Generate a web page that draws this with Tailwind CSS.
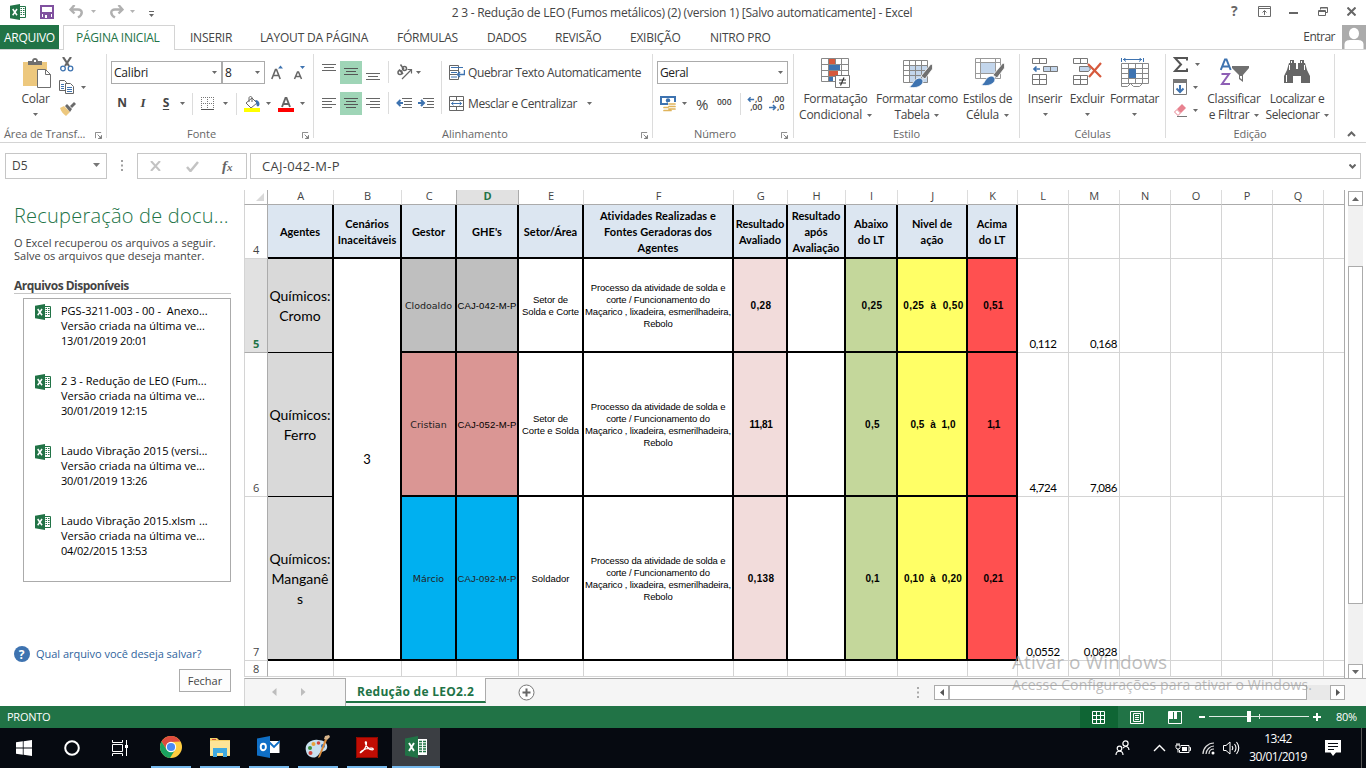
<!DOCTYPE html>
<html lang="pt-BR">
<head>
<meta charset="utf-8">
<title>2 3 - Redução de LEO - Excel</title>
<script src="https://cdn.jsdelivr.net/npm/@tailwindcss/browser@4"></script>
</head>
<body class="w-[1366px] h-[768px] overflow-hidden bg-white font-['Open_Sans','Noto_Sans',sans-serif] text-[12px] leading-4 tracking-[-0.25px] text-[#444] whitespace-nowrap cursor-default">
<svg width="0" height="0" class="absolute">
  <defs>
    <symbol id="caret" viewBox="0 0 5 3"><path d="M0 0h5L2.5 3z" fill="#6a6a6a"/></symbol>
    <symbol id="launcher" viewBox="0 0 8 8"><path d="M.5 7V.5H7" fill="none" stroke="#777"/><path d="M3 3l3 3M7.5 3.5v4h-4" fill="none" stroke="#777"/><path d="M7.5 4v3.500H4z" fill="#777"/></symbol>
    <symbol id="xl" viewBox="0 0 16 16"><path d="M9 2.500h6.500v11H9" fill="#fff" stroke="#217346"/><path d="M10.500 4.500h1.500m1 0h1.500m-4 2h1.500m1 0h1.500m-4 2h1.500m1 0h1.500m-4 2h1.500m1 0h1.500" stroke="#217346"/><path d="M0 1.800L10 0v16L0 14.200z" fill="#217346"/><path d="M2.700 5l4.300 6.200M7 5l-4.300 6.200" stroke="#fff" stroke-width="1.500"/></symbol>
  </defs>
</svg>
<div class="flex flex-col h-[768px]">

<!-- Title bar -->
<header class="flex h-[25px] items-center">
  <div class="flex w-[437px] items-center h-6 -mt-[2px]">
    <svg class="ml-[10px] w-4 h-4"><use href="#xl"/></svg>
    <svg class="ml-[14px]" width="14" height="14" viewBox="0 0 14 14"><path d="M1 1h12v12H1z" fill="none" stroke="#80519f" stroke-width="2"/><path d="M1 7h12v2H1z" fill="#80519f"/><path d="M3 9h8v4H3z" fill="#80519f"/><path d="M5 10h2v3H5z" fill="#fff"/></svg>
    <svg class="ml-[15px]" width="14" height="14" viewBox="0 0 14 14"><path d="M5.500 0L1.500 4.500l4 4M2 4.500H9c5 0 5 5 0 8" fill="none" stroke="#b0b0b0" stroke-width="2.400"/></svg>
    <svg class="ml-2 w-[5px] h-[3px] opacity-50"><use href="#caret"/></svg>
    <svg class="ml-[14px]" width="14" height="14" viewBox="0 0 14 14"><path d="M8.500 0l4 4.500-4 4M12 4.500H5c-5 0-5 5 0 8" fill="none" stroke="#b0b0b0" stroke-width="2.400"/></svg>
    <svg class="ml-[6px] w-[5px] h-[3px] opacity-50"><use href="#caret"/></svg>
    <svg class="ml-[14px] mt-1" width="5" height="6" viewBox="0 0 5 6"><path d="M0 .5h5" stroke="#666"/><path d="M0 3h5L2.500 6z" fill="#666"/></svg>
  </div>
  <div class="w-[490px] text-center"><span>2 3 - Redução de LEO (Fumos metálicos) (2) (version 1) [Salvo automaticamente] - Excel</span></div>
  <div class="flex flex-1 items-center justify-end pr-[10px] h-[22px] -mt-[3px] text-[#666]">
    <span class="w-[9px] mr-[18px] text-[14px] font-bold">?</span>
    <svg class="mr-[18px]" width="13" height="11" viewBox="0 0 13 11"><path d="M.5.5h12v10H.5zM.5 2.500h12M6.500 9V5M4.500 6.500l2-2 2 2" fill="none" stroke="#6a6a6a"/></svg>
    <svg class="mr-5 mt-[3px]" width="9" height="2"><path d="M0 0h9v2H0z" fill="#666"/></svg>
    <svg class="mr-[19px]" width="10" height="9" viewBox="0 0 10 9"><path d="M2.500 2.500v-2h7v5h-2M.5 3.500h7v5h-7zM.5 4.500h7M2.500 1h7" fill="none" stroke="#666"/></svg>
    <svg width="9" height="9" viewBox="0 0 9 9"><path d="M.5.5l8 8m0-8l-8 8" stroke="#666" stroke-width="2"/></svg>
  </div>
</header>

<!-- Ribbon tabs -->
<nav class="flex h-[25px] border-b border-[#d4d4d4]">
  <div class="w-[59px] h-6 bg-[#217346] text-white pl-1 leading-[25px] tracking-[-0.3px]">ARQUIVO</div>
  <div class="ml-1 w-[112px] h-[25px] border border-b-0 border-[#d4d4d4] bg-white text-[#217346] leading-6 pl-[12px]">PÁGINA INICIAL</div>
  <div class="flex flex-1 leading-[26px]">
    <span class="ml-[15px] w-[70px]">INSERIR</span><span class="w-[137px] tracking-[-0.2px]">LAYOUT DA PÁGINA</span><span class="w-[90px]">FÓRMULAS</span><span class="w-[68px]">DADOS</span><span class="w-[75px]">REVISÃO</span><span class="w-20">EXIBIÇÃO</span><span>NITRO PRO</span>
  </div>
  <span class="leading-6 mr-[7px] tracking-[-0.5px]">Entrar</span>
  <svg width="24" height="24" viewBox="0 0 24 24"><path d="M0 0h24v24H0z" fill="#ababab"/><ellipse cx="12" cy="8.500" rx="5" ry="5.800" fill="#fff"/><path d="M2.500 24v-4.500c0-4 4-4.500 6-4.500h7c2 0 6 .5 6 4.500V24z" fill="#fff"/></svg>
</nav>

<!-- Ribbon -->
<section class="flex h-[93px] border-b border-[#d4d4d4]">
  <!-- Clipboard -->
  <div class="flex flex-col w-[106px]">
    <div class="flex h-[76px]">
      <div class="w-[56px] pl-[15px] pt-2 flex flex-col items-center">
        <svg width="28" height="31" viewBox="0 0 28 31" class="shrink-0 ml-[2px]"><path d="M0 4h24v24H0z" fill="#edc87e"/><path d="M5 7V3h4c0-4 6-4 6 0h4v4z" fill="#6f6f6f"/><path d="M11 2h2v2h-2z" fill="#fff"/><path d="M14.500 11.500h8l5 5V29.500h-13z" fill="#fff" stroke="#6f6f6f"/><path d="M22.500 11.500v5h5" fill="none" stroke="#6f6f6f"/></svg>
        <span class="mt-[2px]">Colar</span>
        <svg class="mt-[6px] w-[5px] h-[3px]"><use href="#caret"/></svg>
      </div>
      <div class="pt-[7px] pl-[3px] flex flex-col">
        <svg width="15" height="15" viewBox="0 0 15 15" class="ml-[1px]"><path d="M3 0l6 9M11 0L5 9" stroke="#666" stroke-width="2.200"/><circle cx="3" cy="11.500" r="2.300" fill="none" stroke="#3e73b0" stroke-width="1.300"/><circle cx="10.500" cy="11.500" r="2.300" fill="none" stroke="#3e73b0" stroke-width="1.300"/></svg>
        <div class="flex items-center mt-2">
          <svg width="15" height="14" viewBox="0 0 15 14"><path d="M.5.500h5l2 2V10.500h-7z" fill="#fff" stroke="#666"/><path d="M2 4.500h3m-3 2h3m-3 2h3" stroke="#3e73b0"/><path d="M6.500 3.500h5l3 3v7h-8z" fill="#fff" stroke="#666"/><path d="M8 7.500h5m-5 2h5m-5 2h5" stroke="#3e73b0"/></svg>
          <svg class="ml-[7px] w-[5px] h-[3px]"><use href="#caret"/></svg>
        </div>
        <svg class="mt-2" width="17" height="14" viewBox="0 0 17 14"><path d="M1 6l4-2 6 6-4 4C4 12 2 9 1 6z" fill="#edc87e"/><path d="M6 4l2-2 5 5-2 3z" fill="#6a6a6a"/><path d="M11 4l4-4 2 2-4 4z" fill="#6a6a6a"/></svg>
      </div>
    </div>
    <div class="flex h-4 items-center text-[11px] tracking-[-0.12px] text-[#666] pl-1"><span class="w-[91px]">Área de Transf...</span><svg class="w-[7px] h-[7px] mt-[2px]"><use href="#launcher"/></svg></div>
  </div>
  <div class="w-px h-[84px] mt-1 bg-[#dcdcdc]"></div>

  <!-- Font -->
  <div class="flex flex-col w-[206px]">
    <div class="h-[76px] pt-[11px] pl-1">
      <div class="flex h-[23px] items-center">
        <div class="flex w-[111px] h-[23px] border border-[#ababab] items-center pl-[2px] pr-1 text-[#222] tracking-[-0.2px]"><span class="flex-1">Calibri</span><svg class="w-[5px] h-[3px]"><use href="#caret"/></svg></div>
        <div class="flex w-[43px] h-[23px] border border-[#ababab] items-center pl-[2px] pr-1 text-[#222]"><span class="flex-1">8</span><svg class="w-[5px] h-[3px]"><use href="#caret"/></svg></div>
        <svg class="ml-[6px]" width="34" height="16" viewBox="0 0 34 16"><path d="M.8 14L4.500 4.500h1L9.200 14M2 10.500h6" fill="none" stroke="#666" stroke-width="1.600"/><path d="M7 3.500L9.500.5 12 3.500z" fill="#3e73b0"/><path d="M23.500 14l3-7h1l3 7m-6-2.500h5" fill="none" stroke="#666" stroke-width="1.500"/><path d="M29 1h5l-2.500 3z" fill="#3e73b0"/></svg>
      </div>
      <div class="flex h-[23px] items-center mt-2">
        <b class="w-[22px] text-center text-[12px] -mt-[2px]">N</b>
        <i class="w-[20px] text-center text-[13px] font-['Liberation_Serif',serif] font-bold -mt-[2px]">I</i>
        <b class="w-[26px] text-center text-[12px] underline underline-offset-2 -mt-[2px]">S</b>
        <svg class="ml-[1px] w-[5px] h-[3px]"><use href="#caret"/></svg>
        <div class="ml-[7px] w-px h-[22px] bg-[#dcdcdc]"></div>
        <svg class="ml-2" width="14" height="14" viewBox="0 0 14 14"><path d="M.5 0v13M6.500 0v13M12.500 0v13M0 .5h13M0 6.500h13" stroke="#777" stroke-dasharray="1 1"/><path d="M0 12.500h13" stroke="#555"/></svg>
        <svg class="ml-[8px] w-[5px] h-[3px]"><use href="#caret"/></svg>
        <div class="ml-2 w-px h-[22px] bg-[#dcdcdc]"></div>
        <svg class="ml-[7px]" width="16" height="16" viewBox="0 0 16 16"><path d="M2 7l6-5 5 5-6 5z" fill="#fff" stroke="#666"/><path d="M5 6V2c0-2 3-2 3 0v4" fill="none" stroke="#666"/><path d="M11 4c3 0 4.500 2 4.500 4S14 11 13 10s0-3-2-6z" fill="#3e73b0"/><path d="M0 12h16v4H0z" fill="#ff0"/></svg>
        <svg class="ml-[6px] w-[5px] h-[3px]"><use href="#caret"/></svg>
        <svg class="ml-[7px]" width="16" height="16" viewBox="0 0 16 16"><path d="M4 11L7.500 2h1L12 11M5.500 8h5" fill="none" stroke="#666" stroke-width="1.900"/><path d="M0 12h16v4H0z" fill="red"/></svg>
        <svg class="ml-[6px] w-[5px] h-[3px]"><use href="#caret"/></svg>
      </div>
    </div>
    <div class="flex h-4 items-center text-[11px] tracking-[0px] text-[#666]"><span class="ml-20 w-[115px]">Fonte</span><svg class="w-[7px] h-[7px] mt-[2px]"><use href="#launcher"/></svg></div>
  </div>
  <div class="w-px h-[84px] mt-1 bg-[#dcdcdc]"></div>

  <!-- Alignment -->
  <div class="flex flex-col w-[338px]">
    <div class="flex h-[76px] pt-[11px]">
      <div class="w-[128px] pl-[4px]">
        <div class="flex h-[23px]">
          <div class="w-[22px] h-[23px] pl-1"><svg width="14" height="23"><path d="M0 3.500h14M2 6.500h10M0 9.500h14" stroke="#666"/></svg></div>
          <div class="w-[22px] h-[23px] pl-1 bg-[#9fd5b7]"><svg width="14" height="23"><path d="M0 7.500h14M2 10.500h10M0 13.500h14" stroke="#555"/></svg></div>
          <div class="w-[22px] h-[23px] pl-1"><svg width="14" height="23"><path d="M0 12.500h14M2 15.500h10M0 18.500h14" stroke="#666"/></svg></div>
          <div class="ml-[4px] w-px h-[22px] bg-[#dcdcdc]"></div>
          <svg class="ml-[7px] mt-[3px]" width="17" height="16" viewBox="0 0 17 16"><circle cx="4" cy="8.500" r="2" fill="none" stroke="#666" stroke-width="1.500"/><path d="M3 5.500l4 4.500" stroke="#666" stroke-width="1.500"/><circle cx="8.500" cy="4.500" r="2" fill="none" stroke="#666" stroke-width="1.500"/><path d="M4.500 .5l3.500 5" stroke="#666" stroke-width="1.500"/><path d="M6 15l9-9M11.500 5.500H15.500V9.500" fill="none" stroke="#666" stroke-width="1.200"/></svg>
          <svg class="ml-[3px] mt-[10px] w-[5px] h-[3px]"><use href="#caret"/></svg>
        </div>
        <div class="flex h-[23px] mt-2">
          <div class="w-[22px] h-[23px] pl-1"><svg width="14" height="23"><path d="M0 6.500h14M0 9.500h10M0 12.500h14M0 15.500h10" stroke="#666"/></svg></div>
          <div class="w-[22px] h-[23px] pl-1 bg-[#9fd5b7]"><svg width="14" height="23"><path d="M0 6.500h14M2 9.500h10M0 12.500h14M2 15.500h10" stroke="#555"/></svg></div>
          <div class="w-[22px] h-[23px] pl-1"><svg width="14" height="23"><path d="M0 6.500h14M4 9.500h10M0 12.500h14M4 15.500h10" stroke="#666"/></svg></div>
          <div class="ml-[4px] w-px h-[22px] bg-[#dcdcdc]"></div>
          <svg class="ml-[7px]" width="16" height="23"><path d="M6 6.500h10M8 9.500h8M8 12.500h8M6 15.500h10" stroke="#666"/><path d="M7 11H2M4.500 8L1.500 11l3 3" fill="none" stroke="#3e73b0" stroke-width="2"/></svg>
          <svg class="ml-[6px]" width="16" height="23"><path d="M5 6.500h11M9 9.500h7M9 12.500h7M5 15.500h11" stroke="#666"/><path d="M0 11h5M3 8l3 3-3 3" fill="none" stroke="#3e73b0" stroke-width="2"/></svg>
        </div>
      </div>
      <div class="w-px h-[53px] bg-[#dcdcdc] -ml-[1px]"></div>
      <div class="pl-[7px]">
        <div class="flex h-[23px] items-center">
          <svg width="16" height="16" viewBox="0 0 16 16"><path d="M.5.5h9v14h-9zM0 5.500h9M0 9.500h9" fill="none" stroke="#666"/><path d="M2 2.500h12M2 7.500h6M2 12h6" stroke="#3e73b0"/><path d="M15.500 5v4.500H9M11 7L8.500 9.500 11 12" fill="none" stroke="#3e73b0" stroke-width="1.500"/></svg>
          <span class="ml-[3px] tracking-[-0.4px]">Quebrar Texto Automaticamente</span>
        </div>
        <div class="flex h-[23px] items-center mt-2">
          <svg width="16" height="16" viewBox="0 0 16 16"><path d="M.5.5h14v14H.5zM0 4.500h15M0 10.500h15M7.500 0v4M7.500 11v4" fill="none" stroke="#666"/><path d="M2.500 7.500h10M4.500 5.800L2.500 7.500l2 1.700M10.500 5.800l2 1.700-2 1.700" fill="none" stroke="#3e73b0"/></svg>
          <span class="ml-[3px] tracking-[-0.4px]">Mesclar e Centralizar</span>
          <svg class="ml-[10px] w-[5px] h-[3px]"><use href="#caret"/></svg>
        </div>
      </div>
    </div>
    <div class="flex h-4 items-center text-[11px] tracking-[0px] text-[#666]"><span class="ml-32 w-[199px]">Alinhamento</span><svg class="w-[7px] h-[7px] mt-[2px]"><use href="#launcher"/></svg></div>
  </div>
  <div class="w-px h-[84px] mt-1 bg-[#dcdcdc]"></div>

  <!-- Number -->
  <div class="flex flex-col w-[140px]">
    <div class="h-[76px] pt-[11px] pl-1">
      <div class="flex w-[131px] h-[23px] border border-[#ababab] items-center pl-[2px] pr-1 text-[#222] tracking-[-0.4px]"><span class="flex-1">Geral</span><svg class="w-[5px] h-[3px]"><use href="#caret"/></svg></div>
      <div class="flex h-[23px] items-center mt-2">
        <svg class="ml-[3px]" width="17" height="17" viewBox="0 0 17 17"><path d="M0 1h16v9H0z" fill="#3e73b0"/><path d="M2 3h12v5H2z" fill="#fff"/><circle cx="8" cy="5.500" r="2.200" fill="#3e73b0"/><path d="M8 7h9v9H4v-4h4z" fill="#fff"/><path d="M9 9h6m-6 2.500h6m-6 2.500h6M4 12.500h4m-4 3h7" stroke="#e0b45c" stroke-width="1.700" stroke-linecap="round"/></svg>
        <svg class="ml-[5px] w-[5px] h-[3px]"><use href="#caret"/></svg>
        <span class="ml-[9px] w-[14px] text-[15px]">%</span>
        <span class="ml-[7px] w-[16px] text-[8.5px] font-semibold tracking-[0px] -mt-[3px]">000</span>
        <div class="ml-[7px] w-px h-[22px] bg-[#dcdcdc]"></div>
        <div class="ml-[5px] w-4 h-[17px] text-[9px] leading-[8px] font-semibold text-right tracking-[-0.3px]"><svg class="inline" width="8" height="7" viewBox="0 0 9 7"><path d="M8 3.500H2M4 1L1.500 3.500 4 6" fill="none" stroke="#3e73b0" stroke-width="1.600"/></svg>,0<br>,00</div>
        <div class="ml-[6px] w-[16px] h-[17px] text-[9px] leading-[8px] font-semibold text-right tracking-[-0.3px]">,00<br><svg class="inline" width="8" height="7" viewBox="0 0 8 7"><path d="M0 3.500h6M4 1l2.500 2.500L4 6" fill="none" stroke="#3e73b0" stroke-width="1.600"/></svg>,0</div>
      </div>
    </div>
    <div class="flex h-4 items-center text-[11px] tracking-[-0.1px] text-[#666]"><span class="ml-[41px] w-[87px]">Número</span><svg class="w-[7px] h-[7px] mt-[2px]"><use href="#launcher"/></svg></div>
  </div>
  <div class="w-px h-[84px] mt-1 bg-[#dcdcdc]"></div>

  <!-- Styles -->
  <div class="flex flex-col w-[225px]">
    <div class="flex h-[76px] pt-2">
      <div class="w-[83px] flex flex-col items-center">
        <svg width="30" height="31" viewBox="0 0 30 31" class="shrink-0"><path d="M.5.5h27v23H.5z" fill="#fff"/><path d="M8 1h6v5H8zM8 13h9v5H8z" fill="#d6593c"/><path d="M8 7h11v5H8zM8 19h4v5H8z" fill="#3e73b0"/><path d="M.5.5h27v23H.5zM.5 6.500h27M.5 12.500h27M.5 18.500h27M7.500.5v23M14.500.5v6M20.500.5v23" fill="none" stroke="#888"/><path d="M14.500 17.500h14v12h-14z" fill="#fff" stroke="#777"/><path d="M18 22h7M18 25h7M23 19.500l-3.500 8" stroke="#333" stroke-width="1.200"/></svg>
        <span class="mt-[2px]">Formatação</span>
        <span class="flex items-center">Condicional<svg class="ml-[5px] w-[5px] h-[3px]"><use href="#caret"/></svg></span>
      </div>
      <div class="w-[80px] flex flex-col items-center tracking-[-0.35px]">
        <svg width="30" height="31" viewBox="0 0 30 31" class="shrink-0 ml-[2px]"><path d="M.5 2.500h24v22H.5z" fill="#fff"/><path d="M7 8h18v17H7z" fill="#c3d6ec"/><path d="M.5 2.500h24v22H.5zM.5 7.500h24M.5 12.500h24M.5 17.500h24M6.500 2.500v22M12.500 2.500v22M18.500 2.500v22" fill="none" stroke="#888"/><path d="M18 18L28 6l1.500 1v4L22 21z" fill="#707070" stroke="#fff" stroke-width=".8"/><path d="M6 29c4-1 4-8 10-9 3 0 4 2 4 4-1 4-7 7-14 5z" fill="#3e73b0" stroke="#fff" stroke-width=".8"/></svg>
        <span class="mt-[2px]">Formatar como</span>
        <span class="flex items-center">Tabela<svg class="ml-[5px] w-[5px] h-[3px]"><use href="#caret"/></svg></span>
      </div>
      <div class="w-[61px] flex flex-col items-center">
        <svg width="30" height="31" viewBox="0 0 30 31" class="shrink-0 ml-1"><path d="M.5.500h27v20H.5z" fill="#fff"/><path d="M6 5h14v10H6z" fill="#c3d6ec"/><path d="M.5.5h25v20H.5zM.5 4.500h25M.5 15.500h25M5.500.5v20M20.500.5v20" fill="none" stroke="#999"/><path d="M18 17L28 5l1.500 1v4L22 20z" fill="#707070" stroke="#fff" stroke-width=".8"/><path d="M6 27c4-1 4-8 10-9 3 0 4 2 4 4-1 4-7 7-14 5z" fill="#3e73b0" stroke="#fff" stroke-width=".8"/></svg>
        <span class="mt-[2px] tracking-[-0.35px]">Estilos de</span>
        <span class="flex items-center">Célula<svg class="ml-[5px] w-[5px] h-[3px]"><use href="#caret"/></svg></span>
      </div>
    </div>
    <div class="h-4 text-[11px] tracking-[-0.1px] text-[#666] text-center">Estilo</div>
  </div>
  <div class="w-px h-[84px] mt-1 bg-[#dcdcdc]"></div>

  <!-- Cells -->
  <div class="flex flex-col w-[145px]">
    <div class="flex h-[76px] pt-[8px]">
      <div class="w-[46px] ml-[2px] flex flex-col items-center">
        <svg width="26" height="31" viewBox="0 0 26 31" class="shrink-0"><path d="M.5 .5h14v5H.5zM7.500 .5v5M.5 16.500h14v10H.5zM7.500 16.500v10M.5 21.500h14" fill="none" stroke="#777"/><path d="M11.500 8.500h14v5h-14z" fill="#c3d6ec" stroke="#777"/><path d="M18.500 8.500v5" stroke="#777"/><path d="M8 11H2M4.500 8.500L2 11l2.500 2.500" fill="none" stroke="#3e73b0" stroke-width="1.700"/></svg>
        <span class="mt-[2px]">Inserir</span><svg class="mt-[6px] w-[5px] h-[3px]"><use href="#caret"/></svg>
      </div>
      <div class="w-[38px] flex flex-col items-center">
        <svg width="29" height="31" viewBox="0 0 29 31" class="shrink-0"><path d="M.5 .5h14v5H.5zM7.500 .5v5M.5 17.500h14v9H.5zM7.500 17.500v9M.5 21.500h14" fill="none" stroke="#777"/><path d="M6.500 8.500h9l2 2.500-2 2.500h-9z" fill="#c3d6ec" stroke="#777"/><path d="M15 6l13 13M28 5L16 19" stroke="#d6593c" stroke-width="2.200"/></svg>
        <span class="mt-[2px] tracking-[-0.35px]">Excluir</span><svg class="mt-[6px] w-[5px] h-[3px]"><use href="#caret"/></svg>
      </div>
      <div class="w-[57px] flex flex-col items-center">
        <svg width="28" height="31" viewBox="0 1 28 31" class="shrink-0"><path d="M.5 0v5M22.500 0v5M2 2.500h19M5 .5L2.500 2.500 5 4.500M18 .5l2.500 2L18 4.500" fill="none" stroke="#3e73b0"/><path d="M.5 6.500h27v20H.5zM.5 11.500h27M.5 21.500h27M7.500 6.500v20M14.500 6.500v20M21.500 6.500v20M.5 16.500h27" fill="#fff" stroke="#888"/><path d="M8 12h7v9H8z" fill="#3e73b0"/><path d="M.5 26v3.500h6l3-3 3 3h6l3-3" fill="none" stroke="#888"/></svg>
        <span class="mt-[2px] tracking-[-0.35px]">Formatar</span><svg class="mt-[6px] w-[5px] h-[3px]"><use href="#caret"/></svg>
      </div>
    </div>
    <div class="h-4 text-[11px] tracking-[-0.1px] text-[#666] text-center">Células</div>
  </div>
  <div class="w-px h-[84px] mt-1 bg-[#dcdcdc]"></div>

  <!-- Editing -->
  <div class="flex flex-col w-[168px]">
    <div class="flex h-[76px]">
      <div class="w-[36px] pl-[7px] pt-[6px]">
        <div class="flex items-center h-4"><svg width="15" height="15" viewBox="0 0 15 15"><path d="M14 3.500V1H2l6 6.500L2 14h12v-2.500" fill="none" stroke="#555" stroke-width="2"/></svg><svg class="ml-[7px] w-[5px] h-[3px]"><use href="#caret"/></svg></div>
        <div class="flex items-center h-4 mt-[7px]"><svg width="14" height="16" viewBox="0 0 14 16"><path d="M.5.5h13v15H.5z" fill="#fff" stroke="#777"/><path d="M0 0h14v4H0z" fill="#777"/><path d="M7 6v7M3.500 9.500L7 13l3.500-3.500" fill="none" stroke="#3e73b0" stroke-width="2"/></svg><svg class="ml-[6px] w-[5px] h-[3px]"><use href="#caret"/></svg></div>
        <div class="flex items-center h-4 mt-[7px]"><svg width="14" height="13" viewBox="0 0 14 13"><path d="M4 5l5-5 4 4-5 5z" fill="#e8828f"/><path d="M1.500 8L4 5.500l3.500 3.500L5 11.500z" fill="#fff" stroke="#e8828f"/><path d="M4 12.500h10" stroke="#777"/></svg><svg class="ml-[6px] w-[5px] h-[3px]"><use href="#caret"/></svg></div>
      </div>
      <div class="w-[64px] pt-2 flex flex-col items-center">
        <svg width="29" height="31" viewBox="0 0 29 31" class="shrink-0"><path d="M.8 12L5 1.500h1.500L10.700 12M2.500 8.500h6.500" fill="none" stroke="#3e73b0" stroke-width="2"/><path d="M1.500 16h7.500L2 26h8" fill="none" stroke="#8e5fb5" stroke-width="2"/><path d="M12 8h17v2l-6 7v7l-4-3v-4l-7-7z" fill="#707070"/><path d="M20 18h2v3.500l-2-1.500z" fill="#fff"/></svg>
        <span class="mt-[2px]">Classificar</span>
        <span class="flex items-center">e Filtrar<svg class="ml-[5px] w-[5px] h-[3px]"><use href="#caret"/></svg></span>
      </div>
      <div class="w-[62px] pt-2 flex flex-col items-center">
        <svg width="26" height="31" viewBox="0 0 26 31" class="shrink-0"><path d="M6 2h4v3h2v6h2V5h2V2h4v3h1l2 7 3 6v7h-9v-7h-8v7H0v-7l3-6 2-7h1z" fill="#666"/><path d="M7.500 3v2M17.500 3v2M5.500 7v5M20.500 7v5M2.500 17v7M16.500 18v6" stroke="#fff"/></svg>
        <span class="mt-[2px] tracking-[-0.4px]">Localizar e</span>
        <span class="flex items-center tracking-[-0.4px]">Selecionar<svg class="ml-[4px] w-[5px] h-[3px]"><use href="#caret"/></svg></span>
      </div>
    </div>
    <div class="h-4 text-[11px] tracking-[-0.1px] text-[#666] text-center">Edição</div>
  </div>
  <div class="w-px h-[84px] mt-1 bg-[#dcdcdc]"></div>
  <div class="pt-[81px] pl-[12px]"><svg width="9" height="6"><path d="M1 5l3.500-3.500L8 5" fill="none" stroke="#666" stroke-width="2"/></svg></div>
</section>

<!-- Formula bar -->
<section class="flex h-[47px] pt-[10px] pl-[5px] tracking-[0px]">
  <div class="flex items-center w-[102px] h-[26px] border border-[#c6c6c6] pl-[6px] pr-[6px]"><span class="flex-1 text-[12px]">D5</span><svg class="w-[7px] h-[4px] -mt-[3px]"><path d="M0 0h7L3.500 4z" fill="#777"/></svg></div>
  <svg class="ml-[14px] mt-[7px]" width="2" height="12"><path d="M0 1h2M0 5.500h2M0 10h2" stroke="#a0a0a0" stroke-width="2"/></svg>
  <div class="flex items-center ml-[14px] w-[110px] h-[26px] border border-[#c6c6c6]">
    <svg class="ml-[12px]" width="11" height="10"><path d="M1 0l9 10M10 0L1 10" stroke="#c3c3c3" stroke-width="2"/></svg>
    <svg class="ml-[25px]" width="13" height="11"><path d="M1 6l3.500 4L12 1" fill="none" stroke="#c3c3c3" stroke-width="2.500"/></svg>
    <span class="ml-[23px] font-['Liberation_Serif',serif] italic font-bold text-[15px] text-[#666]">f<span class="text-[11px]">x</span></span>
  </div>
  <div class="flex items-center ml-[3px] w-[1111px] h-[26px] border border-[#c6c6c6] pl-[11px] pr-1"><span class="flex-1 text-[13px] tracking-[0.32px]">CAJ-042-M-P</span><svg width="7" height="5"><path d="M.5.5l3 3 3-3" fill="none" stroke="#666" stroke-width="2"/></svg></div>
</section>

<!-- Workspace -->
<main class="flex h-[516px]">
  <!-- Document recovery pane -->
  <aside class="w-[244px] pl-[14px] tracking-[0px]">
    <h1 class="mt-[12px] h-7 leading-7 text-[20px] font-light text-[#217346] tracking-[0.22px]">Recuperação de docu...</h1>
    <p class="mt-[6px] text-[11px] leading-[13px]">O Excel recuperou os arquivos a seguir.<br>Salve os arquivos que deseja manter.</p>
    <h2 class="mt-[16px] w-[217px] h-[16px] border-b border-[#c6c6c6] text-[12px] leading-[15px] font-bold tracking-[-0.5px]">Arquivos Disponíveis</h2>
    <div class="mt-1 ml-[9px] w-[208px] h-[284px] border border-[#ababab] pt-[4px] pl-[11px] text-[11px] leading-[15px] text-black">
      <div class="flex h-[70px]"><svg class="w-4 h-4 mt-[1px] mr-[10px]"><use href="#xl"/></svg><p>PGS-3211-003 - 00 -&nbsp; Anexo...<br>Versão criada na última ve...<br><span class="tracking-[-0.2px]">13/01/2019 20:01</span></p></div>
      <div class="flex h-[70px]"><svg class="w-4 h-4 mt-[1px] mr-[10px]"><use href="#xl"/></svg><p>2 3 - Redução de LEO (Fum...<br>Versão criada na última ve...<br><span class="tracking-[-0.2px]">30/01/2019 12:15</span></p></div>
      <div class="flex h-[70px]"><svg class="w-4 h-4 mt-[1px] mr-[10px]"><use href="#xl"/></svg><p>Laudo Vibração 2015 (versi...<br>Versão criada na última ve...<br><span class="tracking-[-0.2px]">30/01/2019 13:26</span></p></div>
      <div class="flex"><svg class="w-4 h-4 mt-[1px] mr-[10px]"><use href="#xl"/></svg><p>Laudo Vibração 2015.xlsm&nbsp; <span class="-ml-[2px]">...</span><br>Versão criada na última ve...<br><span class="tracking-[-0.2px]">04/02/2015 13:53</span></p></div>
    </div>
    <div class="flex items-center mt-16 h-4 text-[11px] text-[#2f649d] tracking-[-0.03px]"><svg class="mr-[6px]" width="16" height="16"><circle cx="8" cy="8" r="8" fill="#3e73b0"/><text x="4.800" y="12.500" font-size="12" font-weight="700" fill="#fff">?</text></svg>Qual arquivo você deseja salvar?</div>
    <div class="mt-[7px] ml-[165px] w-[52px] h-[23px] border border-[#ababab] bg-[#fdfdfd] text-center text-[11px] leading-[22px]">Fechar</div>
  </aside>

  <div class="w-[1122px]">
    <div class="flex h-[488px]">
      <!-- Worksheet -->
      <div class="grid w-[1101px] h-[488px] border-r border-[#ababab] grid-cols-[24px_66px_68px_55px_62px_65px_150px_54px_58px_52px_70px_50px_51px_51px_51px_51px_51px_51px_20px] grid-rows-[15px_54px_94px_144px_164px_16px_1px] text-center [&>.font-bold.border-r-2]:pt-[2px] [&>.leading-3]:pt-[2px]">
        <!-- Column letters -->
        <div class="border-b border-r border-l border-[#ababab] border-l-[#d4d4d4] flex items-end justify-end pb-[3px] pr-[3px]"><svg width="8" height="8"><path d="M8 0v8H0z" fill="#d9d9d9"/></svg></div>
        <div class="border-b border-r border-r-[#dcdcdc] border-b-[#ababab] text-[11px] leading-[12px]">A</div>
        <div class="border-b border-r border-r-[#dcdcdc] border-b-[#ababab] text-[11px] leading-[12px]">B</div>
        <div class="border-b border-r border-r-[#ababab] border-b-[#ababab] text-[11px] leading-[12px]">C</div>
        <div class="border-b border-r border-r-[#ababab] border-b-[#ababab] text-[11px] leading-[12px] bg-[#e1e1e1] text-[#217346] font-bold">D</div>
        <div class="border-b border-r border-r-[#dcdcdc] border-b-[#ababab] text-[11px] leading-[12px]">E</div>
        <div class="border-b border-r border-r-[#dcdcdc] border-b-[#ababab] text-[11px] leading-[12px]">F</div>
        <div class="border-b border-r border-r-[#dcdcdc] border-b-[#ababab] text-[11px] leading-[12px]">G</div>
        <div class="border-b border-r border-r-[#dcdcdc] border-b-[#ababab] text-[11px] leading-[12px]">H</div>
        <div class="border-b border-r border-r-[#dcdcdc] border-b-[#ababab] text-[11px] leading-[12px]">I</div>
        <div class="border-b border-r border-r-[#dcdcdc] border-b-[#ababab] text-[11px] leading-[12px]">J</div>
        <div class="border-b border-r border-r-[#dcdcdc] border-b-[#ababab] text-[11px] leading-[12px]">K</div>
        <div class="border-b border-r border-r-[#dcdcdc] border-b-[#ababab] text-[11px] leading-[12px]">L</div>
        <div class="border-b border-r border-r-[#dcdcdc] border-b-[#ababab] text-[11px] leading-[12px]">M</div>
        <div class="border-b border-r border-r-[#dcdcdc] border-b-[#ababab] text-[11px] leading-[12px]">N</div>
        <div class="border-b border-r border-r-[#dcdcdc] border-b-[#ababab] text-[11px] leading-[12px]">O</div>
        <div class="border-b border-r border-r-[#dcdcdc] border-b-[#ababab] text-[11px] leading-[12px]">P</div>
        <div class="border-b border-r border-r-[#dcdcdc] border-b-[#ababab] text-[11px] leading-[12px]">Q</div>
        <div class="border-b border-b-[#ababab]"></div>

        <!-- Row 4 -->
        <div class="border border-t-0 border-[#d4d4d4] border-r-[#ababab] flex items-end justify-center text-[11px] leading-[16px]">4</div>
        <div class="flex items-center justify-center border-r-2 border-b-2 border-black bg-[#dce6f1] text-black font-['Lato'] font-bold text-[11px] tracking-[0px]">Agentes</div>
        <div class="flex items-center justify-center border-r-2 border-b-2 border-black bg-[#dce6f1] text-black font-['Lato'] font-bold text-[11px] tracking-[0.1px]">Cenários<br>Inaceitáveis</div>
        <div class="flex items-center justify-center border-r-2 border-b-2 border-black bg-[#dce6f1] text-black font-['Lato'] font-bold text-[11px] tracking-[0px]">Gestor</div>
        <div class="flex items-center justify-center border-r-2 border-b-2 border-black bg-[#dce6f1] text-black font-['Lato'] font-bold text-[11px] tracking-[0px]">GHE's</div>
        <div class="flex items-center justify-center border-r-2 border-b-2 border-black bg-[#dce6f1] text-black font-['Lato'] font-bold text-[11px] tracking-[0px]">Setor/Área</div>
        <div class="flex items-center justify-center border-r-2 border-b-2 border-black bg-[#dce6f1] text-black font-['Lato'] font-bold text-[11px] tracking-[0.1px]">Atividades Realizadas e<br>Fontes Geradoras dos<br>Agentes</div>
        <div class="flex items-center justify-center border-r-2 border-b-2 border-black bg-[#dce6f1] text-black font-['Lato'] font-bold text-[11px] tracking-[0px]">Resultado<br>Avaliado</div>
        <div class="flex items-center justify-center border-r-2 border-b-2 border-black bg-[#dce6f1] text-black font-['Lato'] font-bold text-[11px] tracking-[0px]">Resultado<br>após<br>Avaliação</div>
        <div class="flex items-center justify-center border-r-2 border-b-2 border-black bg-[#dce6f1] text-black font-['Lato'] font-bold text-[11px] tracking-[0px]">Abaixo<br>do LT</div>
        <div class="flex items-center justify-center border-r-2 border-b-2 border-black bg-[#dce6f1] text-black font-['Lato'] font-bold text-[11px] tracking-[0px]">Nivel de<br>ação</div>
        <div class="flex items-center justify-center border-r-2 border-b-2 border-black bg-[#dce6f1] text-black font-['Lato'] font-bold text-[11px] tracking-[0px]">Acima<br>do LT</div>
        <div class="border-r border-b border-[#d4d4d4]"></div><div class="border-r border-b border-[#d4d4d4]"></div><div class="border-r border-b border-[#d4d4d4]"></div><div class="border-r border-b border-[#d4d4d4]"></div><div class="border-r border-b border-[#d4d4d4]"></div><div class="border-r border-b border-[#d4d4d4]"></div><div class="border-b border-[#d4d4d4]"></div>

        <!-- Row 5 -->
        <div class="border border-t-0 border-[#d4d4d4] border-b-[#ababab] border-r-[#ababab] bg-[#e1e1e1] flex items-end justify-center text-[11px] leading-[16px] font-bold text-[#217346]">5</div>
        <div class="flex items-center justify-center border-r-2 border-b border-black bg-[#d9d9d9] text-black font-['Lato'] text-[14px] leading-5 tracking-[0px]">Químicos:<br>Cromo</div>
        <div class="row-span-3 flex items-center justify-center border-r-2 border-b-2 border-black text-black font-['Lato'] text-[13px]">3</div>
        <div class="flex items-center justify-center border-r-2 border-b-2 border-black bg-[#bfbfbf] text-[#222] font-['DejaVu_Sans'] text-[9.5px] leading-3 tracking-[0px]">Clodoaldo</div>
        <div class="flex items-center justify-center border-r-2 border-b-2 border-black bg-[#bfbfbf] text-black font-['Liberation_Sans'] text-[9.5px] leading-3 tracking-[0.15px]">CAJ-042-M-P</div>
        <div class="flex items-center justify-center border-r-2 border-b-2 border-black text-black font-['Liberation_Sans'] text-[9.5px] leading-3 tracking-[-0.1px]">Setor de<br>Solda e Corte</div>
        <div class="flex items-center justify-center border-r-2 border-b-2 border-black text-black font-['Liberation_Sans'] text-[9.5px] leading-3 tracking-[-0.17px]"><p>Processo da atividade de solda e<br>corte / Funcionamento do<br>Maçarico , lixadeira, esmerilhadeira,<br>Rebolo</p></div>
        <div class="flex items-center justify-center border-r-2 border-b-2 border-black bg-[#f2dcdb] text-black font-['Liberation_Sans'] font-bold text-[10px] tracking-[0.4px] pl-[2px]">0,28</div>
        <div class="border-r-2 border-b-2 border-black"></div>
        <div class="flex items-center justify-center border-r-2 border-b-2 border-black bg-[#c4d79b] text-black font-['Liberation_Sans'] font-bold text-[10px] tracking-[0.4px] pl-[2px]">0,25</div>
        <div class="flex items-center justify-center border-r-2 border-b-2 border-black bg-[#ffff66] text-black font-['Liberation_Sans'] font-bold text-[10px] tracking-[0.4px] [word-spacing:3px] pl-[3px]">0,25 à 0,50</div>
        <div class="flex items-center justify-center border-r-2 border-b-2 border-black bg-[#ff5050] text-black font-['Liberation_Sans'] font-bold text-[10px] tracking-[0.2px] pl-[3px]">0,51</div>
        <div class="flex items-end justify-center border-r border-b border-[#d4d4d4] text-black font-['Lato'] text-[11.5px] tracking-[-0.45px]">0,112</div>
        <div class="flex items-end justify-end pr-[2px] border-r border-b border-[#d4d4d4] text-black font-['Lato'] text-[11.5px] tracking-[-0.45px]">0,168</div>
        <div class="border-r border-b border-[#d4d4d4]"></div><div class="border-r border-b border-[#d4d4d4]"></div><div class="border-r border-b border-[#d4d4d4]"></div><div class="border-r border-b border-[#d4d4d4]"></div><div class="border-b border-[#d4d4d4]"></div>

        <!-- Row 6 -->
        <div class="border border-t-0 border-[#d4d4d4] border-r-[#ababab] flex items-end justify-center text-[11px] leading-[16px]">6</div>
        <div class="flex items-center justify-center border-r-2 border-b border-black bg-[#d9d9d9] text-black font-['Lato'] text-[14px] leading-5 tracking-[0px]">Químicos:<br>Ferro</div>
        <div class="flex items-center justify-center border-r-2 border-b-2 border-black bg-[#da9694] text-[#222] font-['DejaVu_Sans'] text-[9.5px] leading-3 tracking-[0px]">Cristian</div>
        <div class="flex items-center justify-center border-r-2 border-b-2 border-black bg-[#da9694] text-black font-['Liberation_Sans'] text-[9.5px] leading-3 tracking-[0.15px]">CAJ-052-M-P</div>
        <div class="flex items-center justify-center border-r-2 border-b-2 border-black text-black font-['Liberation_Sans'] text-[9.5px] leading-3 tracking-[-0.1px]">Setor de<br>Corte e Solda</div>
        <div class="flex items-center justify-center border-r-2 border-b-2 border-black text-black font-['Liberation_Sans'] text-[9.5px] leading-3 tracking-[-0.17px]"><p>Processo da atividade de solda e<br>corte / Funcionamento do<br>Maçarico , lixadeira, esmerilhadeira,<br>Rebolo</p></div>
        <div class="flex items-center justify-center border-r-2 border-b-2 border-black bg-[#f2dcdb] text-black font-['Liberation_Sans'] font-bold text-[10px] pl-[2px]">11,81</div>
        <div class="border-r-2 border-b-2 border-black"></div>
        <div class="flex items-center justify-center border-r-2 border-b-2 border-black bg-[#c4d79b] text-black font-['Liberation_Sans'] font-bold text-[10px] tracking-[0.4px] pl-[3px]">0,5</div>
        <div class="flex items-center justify-center border-r-2 border-b-2 border-black bg-[#ffff66] text-black font-['Liberation_Sans'] font-bold text-[10px] tracking-[0px] [word-spacing:3px] pl-[2px]">0,5 à 1,0</div>
        <div class="flex items-center justify-center border-r-2 border-b-2 border-black bg-[#ff5050] text-black font-['Liberation_Sans'] font-bold text-[10px] tracking-[-0.5px] pl-[3px]">1,1</div>
        <div class="flex items-end justify-center border-r border-b border-[#d4d4d4] text-black font-['Lato'] text-[11.5px] tracking-[-0.45px]">4,724</div>
        <div class="flex items-end justify-end pr-[2px] border-r border-b border-[#d4d4d4] text-black font-['Lato'] text-[11.5px] tracking-[-0.45px]">7,086</div>
        <div class="border-r border-b border-[#d4d4d4]"></div><div class="border-r border-b border-[#d4d4d4]"></div><div class="border-r border-b border-[#d4d4d4]"></div><div class="border-r border-b border-[#d4d4d4]"></div><div class="border-b border-[#d4d4d4]"></div>

        <!-- Row 7 -->
        <div class="border border-t-0 border-[#d4d4d4] border-r-[#ababab] flex items-end justify-center text-[11px] leading-[16px]">7</div>
        <div class="flex items-center justify-center border-r-2 border-b-2 border-black bg-[#d9d9d9] text-black font-['Lato'] text-[14px] leading-5 tracking-[0px] pt-[2px]">Químicos:<br>Manganê<br>s</div>
        <div class="flex items-center justify-center border-r-2 border-b-2 border-black bg-[#00b0f0] text-[#222] font-['DejaVu_Sans'] text-[9.5px] leading-3 tracking-[0px]">Márcio</div>
        <div class="flex items-center justify-center border-r-2 border-b-2 border-black bg-[#00b0f0] text-[#222] font-['Liberation_Sans'] text-[9.5px] leading-3 tracking-[0.15px]">CAJ-092-M-P</div>
        <div class="flex items-center justify-center border-r-2 border-b-2 border-black text-black font-['Liberation_Sans'] text-[9.5px] leading-3 tracking-[0px]">Soldador</div>
        <div class="flex items-center justify-center border-r-2 border-b-2 border-black text-black font-['Liberation_Sans'] text-[9.5px] leading-3 tracking-[-0.17px]"><p>Processo da atividade de solda e<br>corte / Funcionamento do<br>Maçarico , lixadeira, esmerilhadeira,<br>Rebolo</p></div>
        <div class="flex items-center justify-center border-r-2 border-b-2 border-black bg-[#f2dcdb] text-black font-['Liberation_Sans'] font-bold text-[10px] tracking-[0.3px] pl-[2px]">0,138</div>
        <div class="border-r-2 border-b-2 border-black"></div>
        <div class="flex items-center justify-center border-r-2 border-b-2 border-black bg-[#c4d79b] text-black font-['Liberation_Sans'] font-bold text-[10px] tracking-[0px] pl-[3px]">0,1</div>
        <div class="flex items-center justify-center border-r-2 border-b-2 border-black bg-[#ffff66] text-black font-['Liberation_Sans'] font-bold text-[10px] tracking-[0.2px] [word-spacing:3px] pl-[2px]">0,10 à 0,20</div>
        <div class="flex items-center justify-center border-r-2 border-b-2 border-black bg-[#ff5050] text-black font-['Liberation_Sans'] font-bold text-[10px] tracking-[0.1px] pl-[3px]">0,21</div>
        <div class="flex items-end justify-center border-r border-b border-[#d4d4d4] text-black font-['Lato'] text-[11.5px] tracking-[-0.45px]">0,0552</div>
        <div class="flex items-end justify-end pr-[2px] border-r border-b border-[#d4d4d4] text-black font-['Lato'] text-[11.5px] tracking-[-0.45px]">0,0828</div>
        <div class="border-r border-b border-[#d4d4d4]"></div><div class="border-r border-b border-[#d4d4d4]"></div><div class="border-r border-b border-[#d4d4d4]"></div><div class="border-r border-b border-[#d4d4d4]"></div><div class="border-b border-[#d4d4d4]"></div>

        <!-- Row 8 -->
        <div class="border border-t-0 border-[#d4d4d4] border-r-[#ababab] text-[11px] leading-[16px]">8</div>
        <div class="border-r border-b border-[#d4d4d4]"></div><div class="border-r border-b border-[#d4d4d4]"></div><div class="border-r border-b border-[#d4d4d4]"></div><div class="border-r border-b border-[#d4d4d4]"></div><div class="border-r border-b border-[#d4d4d4]"></div><div class="border-r border-b border-[#d4d4d4]"></div><div class="border-r border-b border-[#d4d4d4]"></div><div class="border-r border-b border-[#d4d4d4]"></div><div class="border-r border-b border-[#d4d4d4]"></div><div class="border-r border-b border-[#d4d4d4]"></div><div class="border-r border-b border-[#d4d4d4]"></div><div class="border-r border-b border-[#d4d4d4]"></div><div class="border-r border-b border-[#d4d4d4]"></div><div class="border-r border-b border-[#d4d4d4]"></div><div class="border-r border-b border-[#d4d4d4]"></div><div class="border-r border-b border-[#d4d4d4]"></div><div class="border-r border-b border-[#d4d4d4]"></div><div class="border-b border-[#d4d4d4]"></div>
      </div>
      <!-- Vertical scrollbar -->
      <div class="flex flex-col ml-[3px] mt-[1px] w-[15px] h-[488px] bg-[#f1f1f1]">
        <div class="w-[15px] h-[15px] border border-[#ababab] bg-white flex items-center justify-center"><svg width="7" height="4"><path d="M0 4h7L3.500 0z" fill="#666"/></svg></div>
        <div class="mt-[60px] w-[15px] h-[338px] border border-[#ababab] bg-white"></div>
        <div class="mt-[60px] w-[15px] h-[15px] border border-[#ababab] bg-white flex items-center justify-center"><svg width="7" height="4"><path d="M0 0h7L3.500 4z" fill="#666"/></svg></div>
      </div>
    </div>
    <!-- Sheet tabs -->
    <div class="flex h-7 bg-[#f5f5f5]">
      <div class="w-[102px] h-7 border-t border-r border-l border-[#ababab] border-l-[#d4d4d4] flex items-center pl-[27px] pb-[2px]"><svg width="34" height="8"><path d="M4.500 0v8L0 4zM29 0v8l4.500-4z" fill="#bdbdbd"/></svg></div>
      <div class="w-[140px] h-[25px] bg-white border-r border-r-[#ababab] border-b-2 border-[#217346] text-center leading-[27px] font-bold text-[12px] text-[#217346] tracking-[0.27px]">Redução de LEO2.2</div>
      <div class="flex flex-1 h-7 border-t border-[#ababab]">
        <svg class="ml-[32px] mt-[5px]" width="17" height="17"><circle cx="8.500" cy="8.500" r="7.500" fill="#fff" stroke="#777"/><path d="M8.500 4.500v8M4.500 8.500h8" stroke="#666" stroke-width="2"/></svg>
        <svg class="ml-[382px] mt-2" width="2" height="11"><path d="M0 1h2M0 5.500h2M0 10h2" stroke="#aaa" stroke-width="2"/></svg>
        <div class="flex ml-[15px] mt-[6px] w-[411px] h-[15px] bg-[#e9e9e9]">
          <div class="w-[15px] h-[15px] border border-[#ababab] bg-white flex items-center justify-center"><svg width="4" height="7"><path d="M4 0v7L0 3.500z" fill="#555"/></svg></div>
          <div class="w-[358px] h-[15px] border border-[#ababab] bg-white"></div>
          <div class="ml-[23px] w-[15px] h-[15px] border border-[#ababab] bg-white flex items-center justify-center"><svg width="4" height="7"><path d="M0 0v7l4-3.500z" fill="#555"/></svg></div>
        </div>
      </div>
    </div>
  </div>
</main>

<!-- Status bar -->
<footer class="flex h-[22px] bg-[#217346] text-white items-center">
  <span class="w-[1080px] pl-[7px] text-[11px]">PRONTO</span>
  <div class="w-[38px] h-[22px] bg-[#0f6534] flex items-center pl-3"><svg width="13" height="13"><path d="M.5.5h12v12H.5zM4.500.5v12M8.500.5v12M.5 4.500h12M.5 8.500h12" fill="none" stroke="#fff"/></svg></div>
  <svg class="ml-3" width="14" height="13"><path d="M.5.5h13v12H.5zM3.500 2.500h7v8h-7zM5 4.500h4M5 6.500h4M5 8.500h4" fill="none" stroke="#fff"/></svg>
  <svg class="ml-6" width="14" height="13"><path d="M.5.5h13v12H.5z" fill="none" stroke="#fff"/><path d="M1 0h4v8H1zM6 0h3v8H6z" fill="#fff"/></svg>
  <svg class="ml-[17px]" width="122" height="12"><path d="M0 6h6M114 6h8M118 2v8" stroke="#fff" stroke-width="2"/><path d="M10 5.500h100M60.500 3v5" stroke="#e0ece5"/><path d="M48 0h4v11h-4z" fill="#fff"/></svg>
  <span class="ml-[15px] text-[11px] tracking-[-0.3px]">80%</span>
</footer>

<!-- Taskbar -->
<footer class="flex h-10 bg-[#060a11] text-white">
  <div class="w-12 flex items-center justify-center"><svg width="16" height="16"><path d="M0 2.300L6.800 1.300V7.600H0zM7.600 1.200L16 0v7.600H7.600zM0 8.400h6.800v6.300L0 13.700zM7.600 8.400H16V16L7.600 14.800z" fill="#fff"/></svg></div>
  <div class="w-12 flex items-center justify-center"><svg width="16" height="16"><circle cx="8" cy="8" r="6.800" fill="none" stroke="#fff" stroke-width="2"/></svg></div>
  <div class="w-[50px] flex items-center pl-[15px]"><svg width="18" height="16"><path d="M1.500 0v2.500h10V0M1.500 16v-2.500h10V16M1.500 4.500h10v7h-10z" fill="none" stroke="#fff"/><path d="M15.500 0v16" stroke="#fff"/><path d="M14 5h3v3h-3z" fill="#fff"/></svg></div>
  <div class="w-[49px] flex flex-col items-center"><div class="h-[38px] flex items-center">
    <svg width="22" height="22" viewBox="0 0 22 22"><circle cx="11" cy="11" r="11" fill="#ffcd40"/><path d="M1.500 5.500A11 11 0 0 1 20.500 5.500L11 6 6.500 13.500z" fill="#dd4b3e"/><path d="M1.500 5.500A11 11 0 0 0 10 22L15.300 13.500 11 16 6.500 13.500z" fill="#1aa260"/><circle cx="11" cy="11" r="5.200" fill="#fff"/><circle cx="11" cy="11" r="4.100" fill="#4a8af4"/></svg></div><div class="w-10 h-[2px] bg-[#76b9ed]"></div></div>
  <div class="w-[49px] flex flex-col items-center"><div class="h-[38px] flex items-center">
    <svg width="22" height="20" viewBox="0 0 22 20"><path d="M1 1h7l2 2h11v16H1z" fill="#f3cf67"/><path d="M1 4h20v14.500H1z" fill="#fde497"/><path d="M4 20v-9h14v9h-4v-4H8v4z" fill="#3fa9e0"/><path d="M3 2.500h4" stroke="#d04f3a"/></svg></div><div class="w-10 h-[2px] bg-[#76b9ed]"></div></div>
  <div class="w-[49px] flex flex-col items-center"><div class="h-[38px] flex items-center">
    <svg width="23" height="22" viewBox="0 0 23 22"><path d="M12 5h10.500v12H12z" fill="#fff"/><path d="M12 6l5 5 6-6" fill="none" stroke="#0f6fc6" stroke-width="1.800"/><path d="M0 2.500L13 0v22L0 19.500z" fill="#0f6fc6"/><ellipse cx="6.300" cy="11" rx="2.600" ry="3.200" fill="none" stroke="#fff" stroke-width="1.900"/></svg></div><div class="w-10 h-[2px] bg-[#76b9ed]"></div></div>
  <div class="w-[49px] flex flex-col items-center"><div class="h-[38px] flex items-center">
    <svg width="25" height="24" viewBox="0 0 25 24"><path d="M1 16C-1 9 6 4 13 5c7 0 10 4 9 8s-5 3-7 5-3 5-7 4.500S2 20 1 16z" fill="#c7dff0"/><circle cx="5" cy="13" r="2" fill="#3b8d3b"/><circle cx="8.500" cy="9" r="2" fill="#e8a33a"/><circle cx="13.500" cy="8" r="1.800" fill="#d2453e"/><circle cx="5.500" cy="18" r="2" fill="#d2453e"/><circle cx="18" cy="11" r="2" fill="#2c6dc0"/><path d="M20 4l2 1-7 17-2 1 1-3z" fill="#d98b3a"/><path d="M19 4l1-3 4-1 1 2-3 3z" fill="#d7b48a"/></svg></div><div class="w-10 h-[2px] bg-[#76b9ed]"></div></div>
  <div class="w-[49px] flex flex-col items-center"><div class="h-[38px] flex items-center">
    <svg width="22" height="21" viewBox="0 0 22 21"><path d="M0 0h22v21H0z" fill="#c00d04"/><path d="M.5.5h21v20H.5z" fill="none" stroke="#8c0800"/><path d="M5 15.500c3-1.500 6-7 5.500-10-.2-1.200-1.500-1-1.200.4.500 3 3.500 7 7 7 1.500-.1 1.300-1.600-.3-1.700-3-.2-7.500.9-10 2.500-1.800 1.200-2.200 2.600-1 1.800z" fill="none" stroke="#fff" stroke-width="1.200"/></svg></div><div class="w-10 h-[2px] bg-[#76b9ed]"></div></div>
  <div class="ml-[1px] w-12 flex flex-col items-center bg-[#3b3e43]"><div class="h-[38px] flex items-center">
    <svg width="22" height="22" viewBox="0 0 22 22"><path d="M12 3h10v16H12z" fill="#fff"/><path d="M14 5.500h3m1 0h3m-7 2.500h3m1 0h3m-7 2.500h3m1 0h3m-7 2.500h3m1 0h3m-7 2.500h3m1 0h3" stroke="#217346" stroke-width="1.300"/><path d="M0 2.500L13 0v22L0 19.500z" fill="#217346"/><path d="M4 7l5 8M9 7l-5 8" stroke="#fff" stroke-width="1.900"/></svg></div><div class="w-12 h-[2px] bg-[#76b9ed]"></div></div>
  <div class="flex flex-1 items-center justify-end">
    <svg class="mr-[23px]" width="15" height="16"><circle cx="10.500" cy="3.500" r="2.600" fill="none" stroke="#fff" stroke-width="1.200"/><circle cx="4.500" cy="8.500" r="2.300" fill="none" stroke="#fff" stroke-width="1.200"/><path d="M1 15c0-5 7-5 7 0M8 8c3-3 6-1 6 2" fill="none" stroke="#fff" stroke-width="1.200"/></svg>
    <svg class="mr-[9px]" width="13" height="8"><path d="M1 7l5.500-5.500L12 7" fill="none" stroke="#fff" stroke-width="1.400"/></svg>
    <svg class="mr-[11px]" width="16" height="13"><path d="M6 3.500H14v7H4.500V8M14.500 5.500h1v3h-1M1 3h4v2.500l-1 1.500H2L1 5.500zM2 1v2M4 1v2M3 7v3.500" fill="none" stroke="#fff"/><path d="M7 5h5v4H7z" fill="#fff"/></svg>
    <svg class="mr-[8px]" width="13" height="13"><path d="M1 12C1 6 6 1 12 1M4 12c0-4 4-8 8-8M7 12c0-3 2-5 5-5" fill="none" stroke="#ddd" stroke-width="1.200"/><circle cx="11" cy="11" r="1.500" fill="#fff"/></svg>
    <svg class="mr-[8px]" width="17" height="14"><path d="M.5 4.500H3L7 1v12L3 9.500H.5z" fill="none" stroke="#fff"/><path d="M9 5q1.500 2 0 4M11.500 3q3 4 0 8M13.500 1q4.500 6 0 12" fill="none" stroke="#fff" stroke-width="1.100"/></svg>
    <div class="w-[60px] text-center leading-[18px] text-[12px] tracking-[-0.6px] -mt-[1px]">13:42<br>30/01/2019</div>
    <svg class="ml-[17px] mr-[20px]" width="16" height="16"><path d="M0 0h16v12.500h-5L8 16l-2.500-3.500H0z" fill="#fff"/><path d="M3 3.500h10M3 6.500h10M3 9.500h6" stroke="#060a11"/></svg>
    <div class="w-px h-10 bg-[#555] mr-[4px]"></div>
  </div>
</footer>
</div>

<!-- Windows activation watermark -->
<div class="absolute left-[1012px] top-[650px] text-[#a0a0a0]/70 pointer-events-none">
  <div class="text-[19px] leading-6 tracking-[0.1px]">Ativar o Windows</div>
  <div class="text-[14px] leading-[22px] tracking-[0.13px]">Acesse Configurações para ativar o Windows.</div>
</div>
</body>
</html>
